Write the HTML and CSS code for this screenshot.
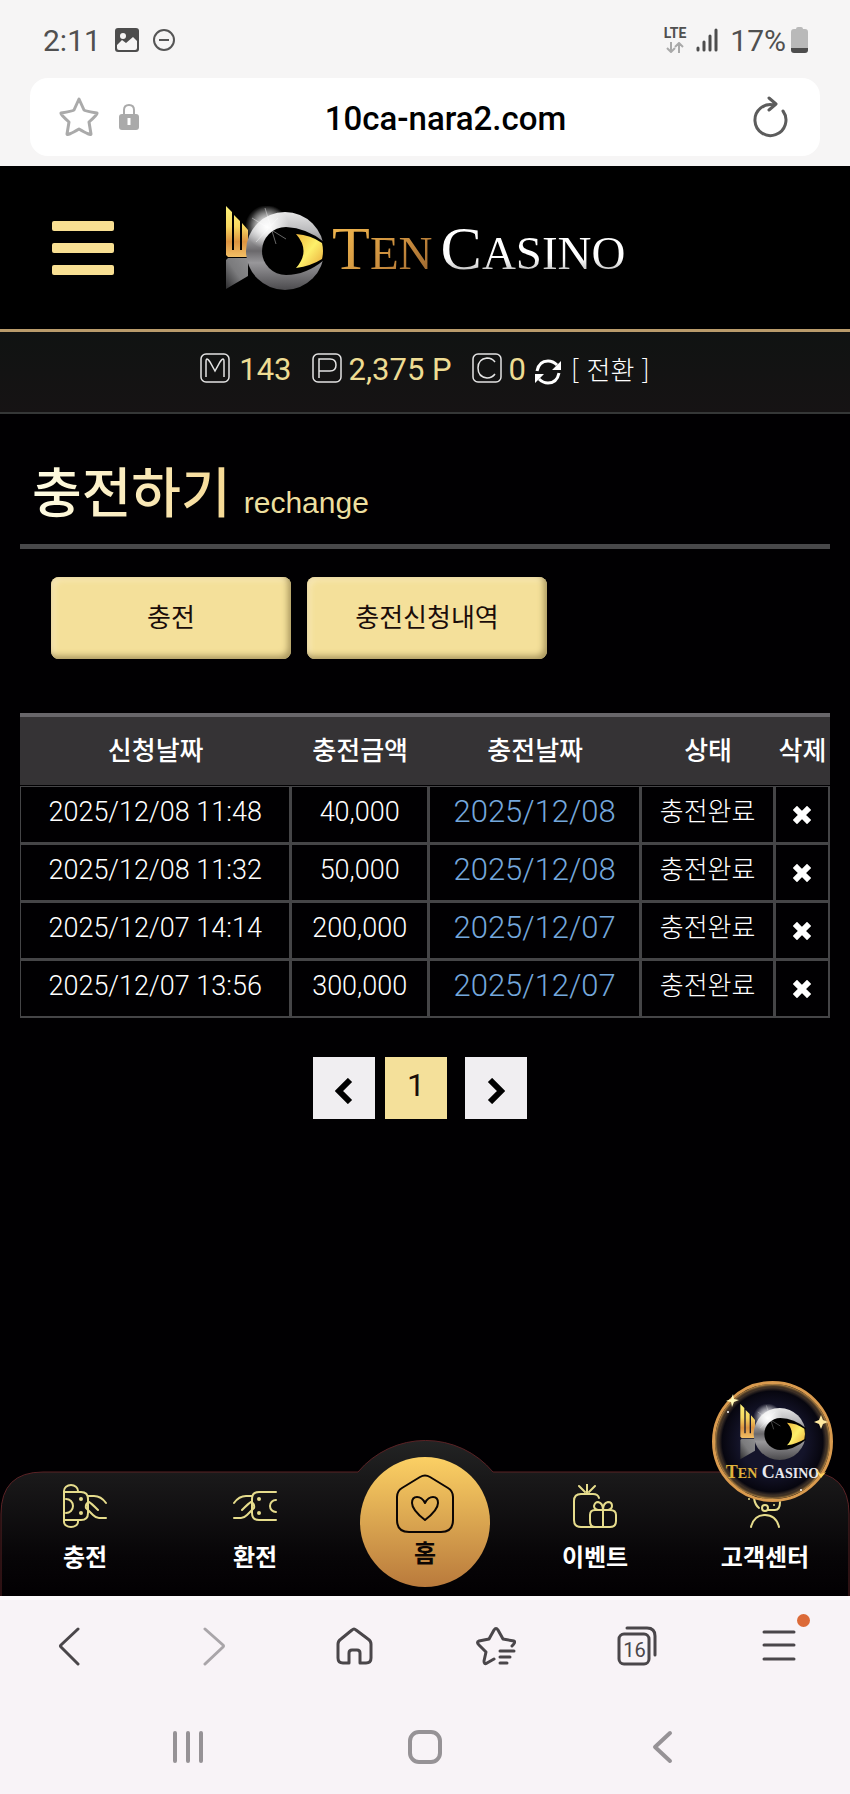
FILE: index.html
```
<!DOCTYPE html>
<html lang="ko">

<head>
    <meta charset="UTF-8">
    <meta name="viewport" content="width=device-width, initial-scale=1.0">
    <title>Ten Casino</title>
    <link rel="stylesheet" href="styles.css">
</head>

<body>
    <!-- shared emblem -->
    <svg class="defs" width="0" height="0" aria-hidden="true">
        <defs>
            <linearGradient id="gold" x1="0" y1="0" x2="0" y2="1">
                <stop offset="0" stop-color="#fdf27a" />
                <stop offset="0.4" stop-color="#f8d860" />
                <stop offset="0.7" stop-color="#dc9340" />
                <stop offset="1" stop-color="#f2bf66" />
            </linearGradient>
            <linearGradient id="eye" x1="0" y1="0" x2="1" y2="1">
                <stop offset="0" stop-color="#f0b93c" />
                <stop offset="0.5" stop-color="#fdf06a" />
                <stop offset="1" stop-color="#e9a83a" />
            </linearGradient>
            <linearGradient id="silver" x1="0" y1="0" x2="0" y2="1">
                <stop offset="0" stop-color="#e6e6e6" />
                <stop offset="0.25" stop-color="#b9b9bb" />
                <stop offset="0.5" stop-color="#6a686b" />
                <stop offset="0.65" stop-color="#98979a" />
                <stop offset="1" stop-color="#4b4a4d" />
            </linearGradient>
            <linearGradient id="base" x1="1" y1="0" x2="0" y2="1">
                <stop offset="0" stop-color="#8d8d8f" />
                <stop offset="0.5" stop-color="#7b7b7d" />
                <stop offset="1" stop-color="#2c2c2e" />
            </linearGradient>
            <radialGradient id="shine">
                <stop offset="0" stop-color="#ffffff" />
                <stop offset="0.35" stop-color="#ffffff" stop-opacity="0.75" />
                <stop offset="1" stop-color="#ffffff" stop-opacity="0" />
            </radialGradient>
            <symbol id="emblem" viewBox="0 0 98 84">
                <path fill="url(#gold)" d="M0 0L6 6V44H8V9L14 15V44H16V17L22 24V51H2L0 49Z" />
                <path fill="url(#base)" d="M0 54L2 52H22V70L0 83Z" />
                <circle cx="42" cy="18" r="18" fill="url(#shine)" opacity="0.4" />
                <circle cx="59" cy="45" r="39" fill="url(#silver)" />
                <circle cx="41" cy="21" r="22" fill="url(#shine)" />
                <path fill="#000" d="M60 21Q81 22 98 36V54Q80 69 60 69A24 24 0 0 1 60 21Z" />
                <path fill="url(#eye)" d="M70 28Q85 29 96 37Q98 45 96 53Q85 60 70 62Q85 45 70 28Z" />
                <path stroke="#fff" stroke-width="1" opacity="0.4" d="M39 2L50 38M26 12L60 33M30 36L52 12" />
            </symbol>
        </defs>
    </svg>

    <div class="status">
        <span class="clock">2:11</span>
        <svg width="24" height="24" viewBox="0 0 24 24">
            <rect width="24" height="24" rx="3" fill="#4d4d4d" />
            <circle cx="8" cy="8" r="3" fill="#f6f5f5" />
            <path fill="#f6f5f5" d="M2 17L7 12L11 15L18 9L22 13V20Q22 22 20 22H4Q2 22 2 20Z" />
        </svg>
        <svg class="dnd" width="22" height="22" viewBox="0 0 22 22" fill="none" stroke="#555" stroke-width="2">
            <circle cx="11" cy="11" r="10" />
            <path d="M6 11H16" />
        </svg>
        <div class="lte">
            <span>LTE</span>
            <svg width="18" height="11" viewBox="0 0 18 11" fill="none" stroke="#a9a9a9" stroke-width="2">
                <path d="M5 0V10M1 6L5 10L9 6M13 11V1M9 5L13 1L17 5" />
            </svg>
        </div>
        <svg width="22" height="24" viewBox="0 0 22 24" stroke="#4d4d4d" stroke-width="3" stroke-linecap="round">
            <path d="M2 20V22M8 14V22M14 8V22M20 2V22" />
        </svg>
        <span class="percent">17%</span>
        <svg width="17" height="26" viewBox="0 0 17 26">
            <path fill="#b9b9b9" d="M5 2Q5 0 7 0H10Q12 0 12 2H14Q17 2 17 5V22H0V5Q0 2 3 2Z" />
            <path fill="#4d4d4d" d="M0 21H17V23Q17 26 14 26H3Q0 26 0 23Z" />
        </svg>
    </div>

    <div class="address">
        <div class="address-box">
            <svg width="40" height="40" viewBox="0 0 40 40" fill="none" stroke="#aaa" stroke-width="3" stroke-linejoin="round">
                <path d="M20 2L25 13Q26 14 38 16Q39 17 30 25L32 37Q32 39 20 32Q8 39 8 37L10 25Q1 17 2 16Q14 14 15 13Z" />
            </svg>
            <svg width="20" height="26" viewBox="0 0 20 26">
                <path fill="none" stroke="#aaa" stroke-width="2" d="M5 12V6Q5 1 10 1Q15 1 15 6V12" />
                <rect y="10" width="20" height="16" rx="3" fill="#aaa" />
                <path stroke="#fff" stroke-width="3" d="M10 14V21" />
            </svg>
            <input class="url" type="text" value="10ca-nara2.com" aria-label="URL">
            <button class="icon-btn" type="button" aria-label="Reload">
                <svg width="36" height="42" viewBox="0 0 36 42" fill="none" stroke="#5c5c5c" stroke-width="3" stroke-linecap="round" stroke-linejoin="round">
                    <path d="M31 15A15.500 15.500 0 1 1 22 9M17 2L24 8L17 14" />
                </svg>
            </button>
        </div>
    </div>

    <header class="header">
        <button class="menu" type="button" aria-label="Menu"><i></i><i></i><i></i></button>
        <a class="logo" href="#">
            <svg width="98" height="84"><use href="#emblem" /></svg>
            <span class="word ten">T<small>EN</small></span>
            <span class="word casino">C<small>ASINO</small></span>
        </a>
    </header>

    <div class="balance">
        <svg width="30" height="30" viewBox="0 0 30 30" fill="none" stroke="#e4e4e4" stroke-width="1.5">
            <rect x="1" y="1" width="28" height="28" rx="5" />
            <path d="M6 24V9Q6 3 10 9L15 18L20 9Q24 3 24 9V24" />
        </svg>
        <span class="money">143</span>
        <svg width="30" height="30" viewBox="0 0 30 30" fill="none" stroke="#e4e4e4" stroke-width="1.5">
            <rect x="1" y="1" width="28" height="28" rx="5" />
            <path d="M7 25V6H18Q24 6 24 12Q24 18 18 18H7" />
        </svg>
        <span class="money point">2,375 P</span>
        <svg width="30" height="30" viewBox="0 0 30 30" fill="none" stroke="#e4e4e4" stroke-width="1.5">
            <rect x="1" y="1" width="28" height="28" rx="5" />
            <path d="M23 9Q20 5 15 5Q6 6 6 15Q6 24 15 25Q20 25 23 21" />
        </svg>
        <span class="money coin">0</span>
        <svg class="refresh" width="26" height="26" viewBox="0 0 26 26">
            <path fill="none" stroke="#fff" stroke-width="3" d="M2 12Q4 2 13 2Q18 2 22 6M24 14Q22 24 13 24Q8 24 4 20" />
            <path fill="#fff" d="M26 2V11H17ZM0 24V15H9Z" />
        </svg>
        <a class="convert" href="#">[ 전환 ]</a>
    </div>

    <main class="main">
        <div class="page-title">
            <h1>충전하기</h1>
            <span>rechange</span>
        </div>

        <div class="tabs">
            <button class="tab" type="button">충전</button>
            <button class="tab" type="button">충전신청내역</button>
        </div>

        <table class="list">
            <colgroup>
                <col class="col-request">
                <col class="col-amount">
                <col class="col-date">
                <col class="col-state">
                <col class="col-delete">
            </colgroup>
            <thead>
                <tr>
                    <th>신청날짜</th>
                    <th>충전금액</th>
                    <th>충전날짜</th>
                    <th>상태</th>
                    <th>삭제</th>
                </tr>
            </thead>
            <tbody>
                <tr>
                    <td>2025/12/08 11:48</td>
                    <td>40,000</td>
                    <td class="date">2025/12/08</td>
                    <td class="state">충전완료</td>
                    <td class="del"><button class="icon-btn" type="button" aria-label="삭제"><svg width="18" height="18" viewBox="0 0 18 18"><path d="M4 4L14 14M14 4L4 14" /></svg></button></td>
                </tr>
                <tr>
                    <td>2025/12/08 11:32</td>
                    <td>50,000</td>
                    <td class="date">2025/12/08</td>
                    <td class="state">충전완료</td>
                    <td class="del"><button class="icon-btn" type="button" aria-label="삭제"><svg width="18" height="18" viewBox="0 0 18 18"><path d="M4 4L14 14M14 4L4 14" /></svg></button></td>
                </tr>
                <tr>
                    <td>2025/12/07 14:14</td>
                    <td>200,000</td>
                    <td class="date">2025/12/07</td>
                    <td class="state">충전완료</td>
                    <td class="del"><button class="icon-btn" type="button" aria-label="삭제"><svg width="18" height="18" viewBox="0 0 18 18"><path d="M4 4L14 14M14 4L4 14" /></svg></button></td>
                </tr>
                <tr>
                    <td>2025/12/07 13:56</td>
                    <td>300,000</td>
                    <td class="date">2025/12/07</td>
                    <td class="state">충전완료</td>
                    <td class="del"><button class="icon-btn" type="button" aria-label="삭제"><svg width="18" height="18" viewBox="0 0 18 18"><path d="M4 4L14 14M14 4L4 14" /></svg></button></td>
                </tr>
            </tbody>
        </table>

        <div class="paging">
            <a class="page arrow" href="#" aria-label="Previous"><svg width="18" height="26" viewBox="0 0 18 26"><path d="M15 2L4 13L15 24" /></svg></a>
            <a class="page current" href="#">1</a>
            <a class="page arrow" href="#" aria-label="Next"><svg width="18" height="26" viewBox="0 0 18 26"><path d="M3 2L14 13L3 24" /></svg></a>
        </div>
    </main>

    <nav class="bottom-nav">
        <svg class="nav-bg" viewBox="0 0 850 156" preserveAspectRatio="none">
            <defs>
                <linearGradient id="navfill" x1="0" y1="0" x2="0" y2="1">
                    <stop offset="0" stop-color="#232424" />
                    <stop offset="0.25" stop-color="#191819" />
                    <stop offset="0.75" stop-color="#070507" />
                    <stop offset="1" stop-color="#020002" />
                </linearGradient>
            </defs>
            <path fill="url(#navfill)" stroke="#5a2225" stroke-width="1" d="M1 156V74Q1 32 43 32H358A88 88 0 0 1 493 32H807Q849 32 849 74V156" />
        </svg>
        <a class="nav-item" href="#">
            <svg width="44" height="44" viewBox="0 0 44 44">
                <path d="M1 8V7A7 6 0 0 1 15 7V8M1 36V38A7 5 0 0 0 15 38V36M1 7V38M1 8H18Q25 8 25 15V29Q25 36 18 36H1M3 15A7 7 0 0 1 3 29" />
                <path d="M25 12H31Q38 12 43 19M43 34H36Q33 34 30 31L23 24Q22 20 26 18Q28 19 35 26" />
                <circle class="dot" cx="18" cy="15" r="2" /><circle class="dot" cx="18" cy="29" r="2" />
            </svg>
            <span>충전</span>
        </a>
        <a class="nav-item" href="#">
            <svg width="44" height="44" viewBox="0 0 44 44">
                <path d="M43 8H26Q19 8 19 15V29Q19 36 26 36H43M43 16A6 6 0 0 0 43 28" />
                <path d="M19 12H13Q6 12 1 19M1 34H8Q11 34 14 31L21 24Q22 20 18 18Q16 19 9 26" />
                <circle class="dot" cx="26" cy="15" r="2" /><circle class="dot" cx="26" cy="29" r="2" />
            </svg>
            <span>환전</span>
        </a>
        <a class="nav-item home" href="#">
            <svg width="60" height="60" viewBox="0 0 60 60">
                <path d="M25 3Q30 0 35 3L53 14Q58 17 58 23V46Q58 58 46 58H14Q2 58 2 46V23Q2 17 7 14Z" />
                <path d="M30 46Q17 36 17 29Q17 23 22 23Q27 23 30 29Q33 23 38 23Q43 23 43 29Q43 36 30 46Z" />
            </svg>
            <span>홈</span>
        </a>
        <a class="nav-item" href="#">
            <svg width="44" height="44" viewBox="0 0 44 44">
                <path d="M14 0V9M6 2L12 8M22 2L16 8M26 14Q25 10 20 10H8Q1 10 1 17V36Q1 43 8 43H37Q43 43 43 37V31Q43 26 37 26H22Q17 26 17 31V37Q17 43 22 43M30 26V43" />
                <path d="M30 26H25Q21 25 21 22Q22 18 25 18Q30 19 30 26Q30 19 35 18Q39 18 39 22Q39 25 35 26Z" />
            </svg>
            <span>이벤트</span>
        </a>
        <a class="nav-item" href="#">
            <svg width="44" height="44" viewBox="0 0 44 44">
                <path d="M8 43Q11 31 22 31Q33 31 36 43M11 14Q12 21 16 24M25 26H32Q37 26 37 18" />
                <circle cx="22" cy="24" r="3" />
                <circle class="dot" cx="31" cy="21" r="1" /><circle class="dot" cx="6" cy="15" r="1" />
            </svg>
            <span>고객센터</span>
        </a>
        <a class="badge" href="#" aria-label="Ten Casino">
            <svg width="66" height="56"><use href="#emblem" /></svg>
            <span class="badge-text"><b>T<small>EN</small></b> C<small>ASINO</small></span>
            <svg class="sparks" viewBox="0 0 121 121">
                <path fill="#ffe9a0" d="M109 34L111 39L116 41L111 43L109 48L107 43L102 41L107 39Z" />
                <path fill="#fff8b8" d="M21 13L22 18L27 19L22 21L20 26L19 21L14 20L19 18Z" />
                <circle cx="16" cy="31" r="1" fill="#fff" /><circle cx="89" cy="109" r="1" fill="#fff" />
                <path fill="#ffd35e" d="M103 88L109 93L114 91L109 97Z" />
            </svg>
        </a>
    </nav>

    <footer class="browser">
        <div class="toolbar">
            <button class="icon-btn" type="button" aria-label="Back"><svg width="40" height="40" viewBox="0 0 40 40"><path d="M27 3L10 19Q9 20 10 21L27 38" /></svg></button>
            <button class="icon-btn faded" type="button" aria-label="Forward"><svg width="40" height="40" viewBox="0 0 40 40"><path d="M13 3L31 19Q32 20 31 21L13 38" /></svg></button>
            <button class="icon-btn" type="button" aria-label="Home"><svg width="40" height="40" viewBox="0 0 40 40"><path d="M18 4Q20 2 22 4L34 13Q37 15 37 18V32Q37 37 32 37H26V27Q26 24 23 24H18Q15 24 15 27V37H9Q4 37 4 32V18Q4 15 7 13Z" /></svg></button>
            <button class="icon-btn" type="button" aria-label="Bookmarks"><svg width="40" height="40" viewBox="0 0 40 40"><path d="M36 20Q40 16 38 15L27 13L22 4Q20 1 18 4L13 13L3 15Q0 16 3 19L10 26L8 35Q8 39 11 37L18 33M24 25H38M24 31H34M24 37H31" /></svg></button>
            <button class="icon-btn tab-count" type="button" aria-label="Tabs"><svg width="40" height="40" viewBox="0 0 40 40"><rect x="2" y="8" width="30" height="30" rx="5" /><path d="M10 2H30Q38 2 38 10V29" /></svg><span>16</span></button>
            <button class="icon-btn more" type="button" aria-label="More"><svg width="40" height="40" viewBox="0 0 40 40"><path d="M5 6H35M5 19H35M5 33H35" /></svg></button>
        </div>
        <div class="system">
            <button class="icon-btn" type="button" aria-label="Recents"><svg width="34" height="34" viewBox="0 0 34 34"><path d="M4 3V31M17 3V31M30 3V31" /></svg></button>
            <button class="icon-btn" type="button" aria-label="Home"><svg width="34" height="34" viewBox="0 0 34 34"><rect x="2" y="2" width="30" height="30" rx="9" /></svg></button>
            <button class="icon-btn" type="button" aria-label="Back"><svg width="34" height="34" viewBox="0 0 34 34"><path d="M25 3L10 17L25 31" /></svg></button>
        </div>
    </footer>
</body>

</html>
```

FILE: styles.css
```
* {
    margin: 0;
    padding: 0;
    box-sizing: border-box;
}

body {
    display: flex;
    flex-direction: column;
    min-height: 100vh;
    background-color: #010002;
    color: #fff;
    font-family: "Noto Sans CJK KR", sans-serif;
}

a {
    color: inherit;
    text-decoration: none;
}

svg {
    display: block;
    flex: none;
}

.defs {
    position: absolute;
}

.icon-btn {
    display: inline-flex;
    background: none;
    border: 0;
}

/* phone status + address */
.status {
    display: flex;
    align-items: center;
    height: 78px;
    padding: 2px 42px 0 43px;
    background-color: #f6f5f5;
    color: #505050;
    font-family: Roboto, sans-serif;
    font-size: 30px;
}

.clock {
    margin-right: 14px;
}

.dnd {
    margin-left: 14px;
}

.lte {
    display: flex;
    flex-direction: column;
    align-items: center;
    gap: 2px;
    margin: 0 10px 0 auto;
    font-size: 14px;
    font-weight: 700;
    line-height: 13px;
}

.percent {
    margin: 0 5px 0 12px;
}

.address {
    padding: 0 30px 10px;
    background-color: #f6f5f5;
}

.address-box {
    display: flex;
    align-items: center;
    height: 78px;
    padding: 0 32px 0 29px;
    border-radius: 18px;
    background-color: #fff;
}

.address-box svg + svg {
    margin-left: 20px;
}

.url {
    flex: 1;
    min-width: 0;
    padding-top: 2px;
    border: 0;
    background: none;
    color: #000;
    font-family: Roboto, sans-serif;
    font-size: 33px;
    font-weight: 500;
    text-align: center;
}

/* site header */
.header {
    display: flex;
    align-items: center;
    height: 166px;
    padding: 0 52px;
    background-color: #000;
    border-bottom: 3px solid #b99b6b;
}

.menu {
    display: flex;
    flex-direction: column;
    gap: 12px;
    width: 62px;
    background: none;
    border: 0;
}

.menu i {
    height: 10px;
    border-radius: 2px;
    background-color: #f8df92;
}

.logo {
    display: flex;
    align-items: center;
    margin-left: 112px;
}

.word {
    margin: 6px 0 0 8px;
    font-family: "Liberation Serif", serif;
    font-size: 62px;
    line-height: 72px;
    -webkit-background-clip: text;
    background-clip: text;
    color: transparent;
}

.word small {
    font-size: 47px;
}

.ten {
    background-image: linear-gradient(135deg, #eab04c 20%, #c78a3c 60%, #8a5a2c);
}

.casino {
    background-image: linear-gradient(#fff 60%, #b5b5b5 80%);
}

.balance {
    display: flex;
    align-items: center;
    justify-content: center;
    height: 82px;
    padding-bottom: 8px;
    border-bottom: 2px solid #353737;
    background-image: linear-gradient(#101312, #161314);
}

.money {
    margin: 4px 20px 0 9px;
    color: #eedc93;
    font-family: Roboto, sans-serif;
    font-size: 31px;
    line-height: 36px;
}

.point,
.coin {
    margin-left: 7px;
}

.coin {
    margin-right: 9px;
}

.refresh {
    margin: 8px 10px 0 0;
}

.convert {
    margin-top: 2px;
    font-size: 26px;
    font-weight: 300;
    line-height: 36px;
}

/* content */
.main {
    flex: 1;
    padding: 0 20px 40px;
}

.page-title {
    display: flex;
    align-items: baseline;
    gap: 13px;
    padding: 36px 12px 14px;
    border-bottom: 5px solid #48484a;
}

.page-title h1 {
    font-size: 54px;
    font-weight: 500;
    line-height: 80px;
    background-image: linear-gradient(90deg, #fffde6, #f6d993);
    -webkit-background-clip: text;
    background-clip: text;
    color: transparent;
}

.page-title span {
    color: #eddf9f;
    font-family: "Liberation Sans", sans-serif;
    font-size: 30px;
}

.tabs {
    display: flex;
    gap: 16px;
    padding: 28px 31px 54px;
}

.tab {
    width: 240px;
    height: 82px;
    padding-bottom: 6px;
    border: 0;
    border-radius: 8px;
    background-color: #f4e09a;
    box-shadow: inset -3px -3px 6px #a8965e, inset 3px 3px 6px #f8e8b8;
    color: #1a0d0a;
    font-family: inherit;
    font-size: 26px;
}

.list {
    width: 100%;
    table-layout: fixed;
    border-spacing: 0;
}

.col-request {
    width: 33.5%;
}

.col-amount {
    width: 17%;
}

.col-date {
    width: 26.2%;
}

.col-state {
    width: 16.5%;
}

.col-delete {
    width: 6.8%;
}

.list th {
    height: 73px;
    padding-bottom: 6px;
    border-top: 4px solid #68666a;
    border-bottom: 1px solid #010002;
    background-color: #353335;
    font-size: 26px;
    font-weight: 500;
    white-space: nowrap;
}

.list td {
    height: 58px;
    padding-bottom: 6px;
    border: 1px solid #454547;
    border-width: 1px 2px 2px 1px;
    font-family: Roboto, "Noto Sans CJK KR", sans-serif;
    font-size: 27px;
    font-weight: 300;
    line-height: 36px;
    text-align: center;
}

.list .date {
    color: #74a7dc;
    font-size: 31px;
}

.list .state {
    font-size: 26px;
}

.list .del {
    padding: 0;
    line-height: 0;
}

.del path {
    fill: none;
    stroke: #fff;
    stroke-width: 6;
    stroke-linecap: square;
}

.paging {
    display: flex;
    justify-content: center;
    margin: 39px 10px 0 0;
}

.page {
    display: flex;
    align-items: center;
    justify-content: center;
    width: 62px;
    height: 62px;
    background-color: #f0eef1;
}

.current {
    margin: 0 18px 0 10px;
    padding-bottom: 6px;
    background-color: #f4e09a;
    color: #1a0d0a;
    font-family: Roboto, sans-serif;
    font-size: 32px;
}

.arrow {
    padding-top: 6px;
}

.arrow path {
    fill: none;
    stroke: #000;
    stroke-width: 6;
}

/* bottom navigation */
.bottom-nav {
    position: relative;
    display: grid;
    grid-template-columns: repeat(5, 1fr);
    height: 124px;
}

.nav-bg {
    position: absolute;
    left: 0;
    bottom: 0;
    width: 100%;
    height: 156px;
}

.nav-item {
    position: relative;
    display: flex;
    flex-direction: column;
    align-items: center;
    gap: 10px;
    padding-top: 12px;
    font-size: 24px;
    font-weight: 700;
    line-height: 36px;
}

.nav-item svg {
    fill: none;
    stroke: #e6dc8c;
    stroke-width: 2;
    stroke-linecap: round;
    stroke-linejoin: round;
}

.nav-item .dot {
    fill: #e6dc8c;
    stroke: none;
}

.home {
    justify-self: center;
    gap: 0;
    width: 130px;
    height: 130px;
    margin-top: -15px;
    padding-top: 17px;
    border-radius: 50%;
    background-image: linear-gradient(#fbd064, #b97a3c);
    color: #0c0604;
}

.home svg {
    stroke: #0c0604;
}

.badge {
    position: absolute;
    top: -91px;
    right: 17px;
    display: flex;
    flex-direction: column;
    align-items: center;
    width: 121px;
    height: 121px;
    padding-top: 20px;
    border: 3px solid #d99a4e;
    border-radius: 50%;
    background: radial-gradient(circle, #14142a 40%, #07060f 62%, #3a2e26 66%, #0b0910 70%);
    box-shadow: inset 0 0 3px 1px #f2b65a;
}

.badge-text {
    color: #e9e9ee;
    font-family: "Liberation Serif", serif;
    font-size: 18px;
    font-weight: 700;
    line-height: 24px;
    white-space: nowrap;
}

.badge-text b {
    color: #e0b23c;
}

.badge-text small {
    font-size: 14px;
}

.sparks {
    position: absolute;
    top: -3px;
    left: -3px;
    width: 121px;
    height: 121px;
}

/* browser toolbar + system buttons */
.browser {
    border-top: 4px solid #fdfbfd;
    background-color: #f8f3f7;
}

.toolbar {
    display: grid;
    grid-template-columns: repeat(6, 1fr);
    justify-items: center;
    padding-top: 26px;
}

.toolbar svg {
    fill: none;
    stroke: #4a464a;
    stroke-width: 3;
    stroke-linecap: round;
    stroke-linejoin: round;
}

.toolbar .faded svg {
    stroke: #a9a5a9;
}

.tab-count,
.more {
    position: relative;
}

.tab-count span {
    position: absolute;
    top: 12px;
    left: 2px;
    width: 30px;
    color: #4a464a;
    font-family: Roboto, sans-serif;
    font-size: 20px;
    line-height: 24px;
    text-align: center;
}

.more::after {
    content: "";
    position: absolute;
    top: -12px;
    right: -11px;
    width: 13px;
    height: 13px;
    border-radius: 50%;
    background-color: #dc6a38;
}

.system {
    display: grid;
    grid-template-columns: repeat(3, 1fr);
    justify-items: center;
    padding: 64px 69px 30px;
}

.system svg {
    fill: none;
    stroke: #969296;
    stroke-width: 4;
    stroke-linecap: round;
    stroke-linejoin: round;
}
```
